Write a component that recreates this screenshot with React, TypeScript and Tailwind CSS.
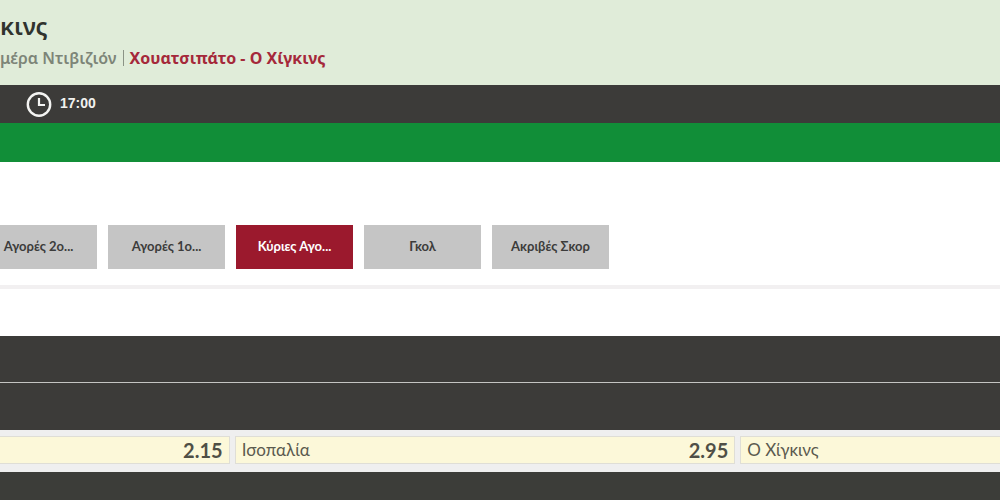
import React, { useState } from 'react';

interface Selection {
  id: string;
  name: string;
  price: string;
}

const markets: string[] = ['Αγορές 2ο...', 'Αγορές 1ο...', 'Κύριες Αγο...', 'Γκολ', 'Ακριβές Σκορ'];

const selections: Selection[] = [
  { id: 'home', name: '', price: '2.15' },
  { id: 'draw', name: 'Ισοπαλία', price: '2.95' },
  { id: 'away', name: 'Ο Χίγκινς', price: '' },
];

const ClockIcon: React.FC = () => (
  <svg viewBox="0 0 26 26" className="h-[26px] w-[26px]" fill="none" stroke="#f4f4f2" aria-hidden="true">
    <circle cx="13" cy="13.5" r="11.2" strokeWidth="2.4" />
    <path d="M13 7V14H19" strokeWidth="2.2" />
  </svg>
);

const App: React.FC = () => {
  const [activeMarket, setActiveMarket] = useState<string>('Κύριες Αγο...');

  return (
    <div className="min-h-screen overflow-hidden bg-white font-['Lato',sans-serif]">
      {/* Event header */}
      <header className="h-[85px] bg-[#e0ecd9] pt-2">
        <h1 className="font-['Noto_Sans',sans-serif] text-2xl leading-9 font-semibold text-[#30332e]">κινς</h1>
        <nav className="flex items-center gap-[6px] font-['Noto_Sans',sans-serif] text-base leading-7">
          <a href="#league" className="font-semibold text-[#7d8578]">μέρα Ντιβιζιόν</a>
          <span className="h-4 w-px bg-[#8b9386]" />
          <a href="#event" className="font-bold text-[#a5283a]">Χουατσιπάτο - Ο Χίγκινς</a>
        </nav>
      </header>

      <div className="flex h-[38px] items-center gap-2 bg-[#3c3b39] pl-[26px]">
        <ClockIcon />
        <time className="pb-[2px] font-['Liberation_Sans',sans-serif] text-sm font-bold text-[#f1f1ef]">17:00</time>
      </div>
      <div className="h-[39px] bg-[#118e38]" />

      {/* Market tabs */}
      <div className="border-b-4 border-[#f2f0f1] pt-[63px] pb-4">
        <div className="-ml-5 flex gap-[11px]">
          {markets.map((market) => (
            <button
              key={market}
              type="button"
              onClick={() => setActiveMarket(market)}
              className={`h-11 w-[117px] shrink-0 text-[13px] font-bold whitespace-nowrap ${activeMarket === market ? 'bg-[#9b192d] text-white' : 'bg-[#c5c5c5] text-[#3c3c3b]'}`}
            >
              {market}
            </button>
          ))}
        </div>
      </div>

      {/* Match result */}
      <section className="mt-[47px]">
        <div className="h-[47px] border-b border-[#c4c4c2] bg-[#3c3b39]" />
        <div className="h-[47px] bg-[#3c3b39]" />
        <div className="bg-[#efefef] pt-[6px] pb-2">
          <div className="-mr-[241px] -ml-[271px] grid grid-cols-3 gap-[5px]">
            {selections.map((selection) => (
              <button
                key={selection.id}
                type="button"
                className="flex h-7 items-center justify-between border border-[#dfded6] bg-[#fcf8d9] px-[6px] text-[#5b5a4f]"
              >
                <span className="text-[17px]">{selection.name}</span>
                <span className="text-xl font-bold text-[#4f4f46]">{selection.price}</span>
              </button>
            ))}
          </div>
        </div>
        <div className="h-7 bg-[#3c3d39]" />
      </section>
    </div>
  );
};

export default App;
